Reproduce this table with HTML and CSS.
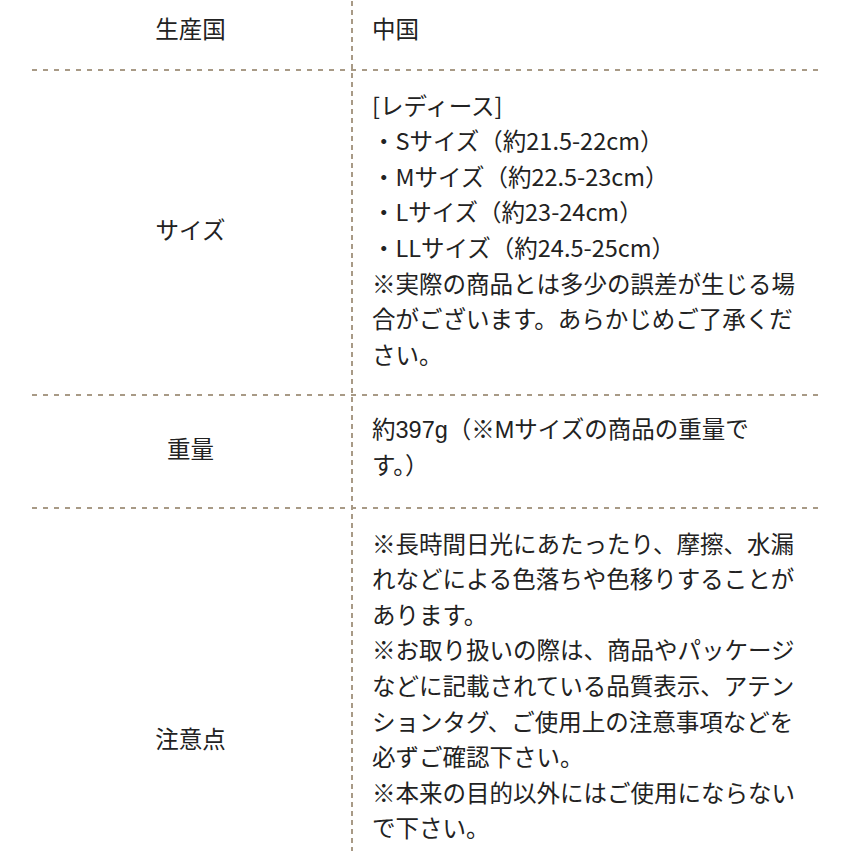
FILE: index.html
```html
<!DOCTYPE html>
<html lang="ja">
<head>
<meta charset="utf-8">
<link rel="stylesheet" href="styles.css">
</head>
<body>
<div class="spec">
  <div class="row first">
    <div class="label">生産国</div>
    <div class="value">中国</div>
  </div>
  <div class="row">
    <div class="label">サイズ</div>
    <div class="value">[レディース]<br>・Sサイズ（約21.5-22cm）<br>・Mサイズ（約22.5-23cm）<br>・Lサイズ（約23-24cm）<br>・LLサイズ（約24.5-25cm）<br>※実際の商品とは多少の誤差が生じる場<br>合がございます。あらかじめご了承くだ<br>さい。</div>
  </div>
  <div class="row">
    <div class="label">重量</div>
    <div class="value narrow">約397g（※Mサイズの商品の重量で<br>す。）</div>
  </div>
  <div class="row">
    <div class="label">注意点</div>
    <div class="value">※長時間日光にあたったり、摩擦、水漏<br>れなどによる色落ちや色移りすることが<br>あります。<br>※お取り扱いの際は、商品やパッケージ<br>などに記載されている品質表示、アテン<br>ションタグ、ご使用上の注意事項などを<br>必ずご確認下さい。<br>※本来の目的以外にはご使用にならない<br>で下さい。<br>※画面上と実物では多少色具合が異なっ<br>て見える場合もございます。ご了承く<br>ださい。</div>
  </div>
</div>
</body>
</html>
```

FILE: styles.css
```css
html, body {
  margin: 0;
  padding: 0;
  background: #ffffff;
}

body {
  font-family: "Noto Sans CJK JP", "Noto Sans", sans-serif;
  color: #222222;
  font-size: 23.5px;
  line-height: 35.6px;
  overflow: hidden;
}

.spec {
  margin-left: 30px;
  width: 790px;
  background-image: linear-gradient(to bottom, #a89a86 5px, transparent 5px);
  background-size: 2px 9px;
  background-position: 321px 1px;
  background-repeat: repeat-y;
}

.row {
  display: grid;
  grid-template-columns: 321px 1fr;
  padding-bottom: 2px;
  background-image: linear-gradient(to right, #a89a86 5px, transparent 5px);
  background-size: 11px 2px;
  background-position: 2px 100%;
  background-repeat: repeat-x;
}

.label {
  display: flex;
  align-items: center;
  justify-content: center;
  padding: 17px 0 22px;
}

.value {
  padding: 17px 20px 22px 21px;
  white-space: nowrap;
}

.row.first .label,
.row.first .value {
  padding-top: 11px;
}

.narrow {
  font-family: "Liberation Sans", "Noto Sans CJK JP", sans-serif;
}
```
